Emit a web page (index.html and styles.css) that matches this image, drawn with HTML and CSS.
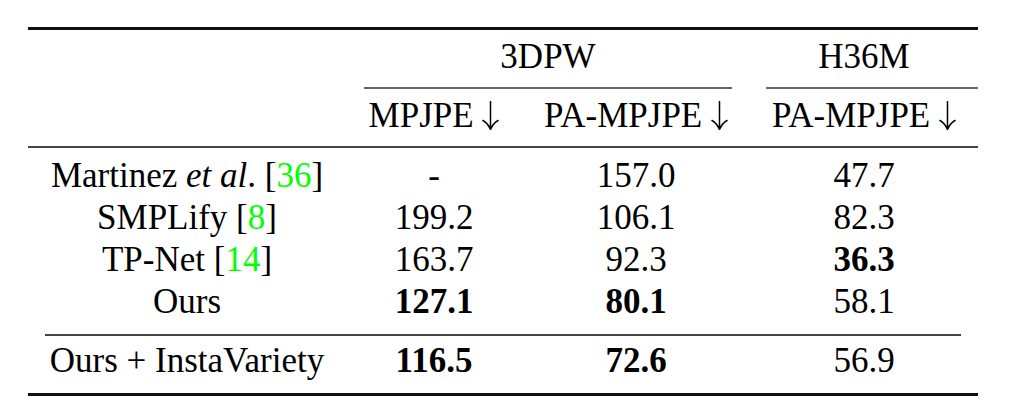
FILE: index.html
```html
<!DOCTYPE html>
<html lang="en">
<head>
<meta charset="utf-8">
<title>Results table</title>
<link rel="stylesheet" href="styles.css">
</head>
<body>
<div class="table">
  <div class="rule top"></div>

  <div class="c h"></div>
  <div class="c h span2">3DPW</div>
  <div class="c h">H36M</div>

  <div class="cmid cmid-a"></div>
  <div class="cmid cmid-b"></div>

  <div class="c h"></div>
  <div class="c h">MPJPE <svg class="arrow" viewBox="0 0 17 29" aria-label="down"><path d="M8.5 0.5 V28.5 M1 19.5 Q6 22.5 8.5 28.5 Q11 22.5 16 19.5"/></svg></div>
  <div class="c h">PA-MPJPE <svg class="arrow" viewBox="0 0 17 29" aria-label="down"><path d="M8.5 0.5 V28.5 M1 19.5 Q6 22.5 8.5 28.5 Q11 22.5 16 19.5"/></svg></div>
  <div class="c h">PA-MPJPE <svg class="arrow" viewBox="0 0 17 29" aria-label="down"><path d="M8.5 0.5 V28.5 M1 19.5 Q6 22.5 8.5 28.5 Q11 22.5 16 19.5"/></svg></div>

  <div class="rule mid"></div>

  <div class="c first">Martinez <i>et al</i>. [<span class="cite">36</span>]</div>
  <div class="c first">-</div>
  <div class="c first">157.0</div>
  <div class="c first">47.7</div>

  <div class="c">SMPLify [<span class="cite">8</span>]</div>
  <div class="c">199.2</div>
  <div class="c">106.1</div>
  <div class="c">82.3</div>

  <div class="c">TP-Net [<span class="cite">14</span>]</div>
  <div class="c">163.7</div>
  <div class="c">92.3</div>
  <div class="c b">36.3</div>

  <div class="c lastg">Ours</div>
  <div class="c lastg b">127.1</div>
  <div class="c lastg b">80.1</div>
  <div class="c lastg">58.1</div>

  <div class="rule mid trim"></div>

  <div class="c final">Ours + InstaVariety</div>
  <div class="c final b">116.5</div>
  <div class="c final b">72.6</div>
  <div class="c final">56.9</div>

  <div class="rule bottom"></div>
</div>
</body>
</html>
```

FILE: styles.css
```css
body {
  margin: 0;
  background: #ffffff;
  font-family: "Liberation Serif", "Times New Roman", serif;
  font-size: 35px;
  color: #000000;
}

.table {
  display: grid;
  grid-template-columns: 318px 176px 228px 228px;
  width: 950px;
  margin: 27px 0 0 28px;
}

.rule {
  grid-column: 1 / -1;
}

.top,
.bottom {
  height: 3px;
  background: #111111;
}

.mid {
  height: 2px;
  background: #444444;
}

.trim {
  margin: 0 17px;
}

.cmid {
  height: 2px;
  background: #666666;
}

.cmid-a {
  grid-column: 2 / 4;
  margin: 0 18px;
}

.cmid-b {
  grid-column: 4 / 5;
  margin-left: 16px;
}

.c {
  text-align: center;
  line-height: 42px;
  white-space: nowrap;
}

.h {
  padding: 6px 0 9px;
}

.arrow {
  width: 17px;
  height: 29px;
  vertical-align: -3px;
  fill: none;
  stroke: #000000;
  stroke-width: 1.5;
  stroke-linecap: round;
}

.span2 {
  grid-column: span 2;
}

.first {
  padding-top: 7px;
}

.lastg {
  padding-bottom: 11px;
}

.final {
  padding: 4px 0 11px;
}

.b {
  font-weight: bold;
}

.cite {
  color: #00ff00;
}
```
